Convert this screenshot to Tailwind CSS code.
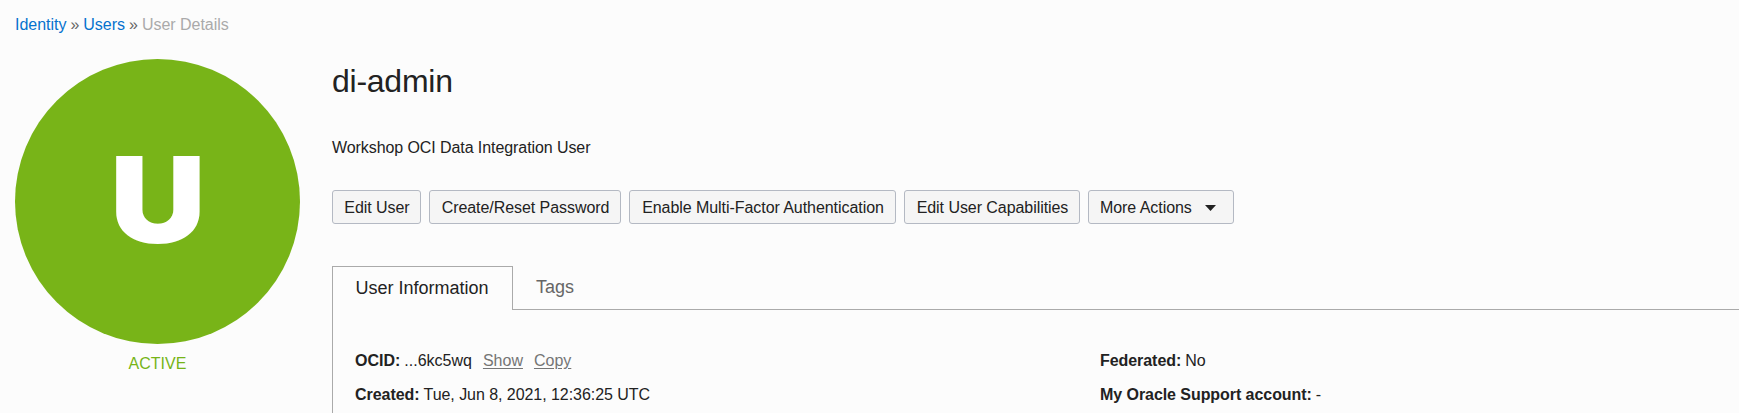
<!DOCTYPE html>
<html lang="en">
<head>
<meta charset="utf-8">
<title>User Details</title>
<script src="https://cdn.jsdelivr.net/npm/@tailwindcss/browser@4"></script>
</head>
<body class="h-[413px] overflow-hidden bg-[#fcfcfc] font-['Liberation_Sans',Arial,sans-serif] text-base leading-6 text-[#222] whitespace-nowrap">
<div class="flex h-[413px] flex-col overflow-hidden">
  <nav class="flex h-[59px] shrink-0 gap-1 pl-[15px] pt-[13px] tracking-[-0.02px] text-[#666]">
    <a class="text-[#0572ce]">Identity</a><span>»</span><a class="text-[#0572ce]">Users</a><span>»</span><span class="text-[#aaa]">User Details</span>
  </nav>
  <div class="flex grow pl-[15px]">
    <aside class="w-[285px] shrink-0 text-center text-[#76b417]">
      <div class="flex size-[285px] items-center justify-center rounded-full bg-[#78b418] pb-[3px]">
        <span class="scale-x-[1.115] font-['Inter'] text-[119px] leading-none font-black text-white">U</span>
      </div>
      <p class="mt-[8px]">ACTIVE</p>
    </aside>
    <main class="ml-[32px] flex grow flex-col">
      <h1 class="mt-[2px] text-[32px] leading-10 tracking-[-0.25px]">di-admin</h1>
      <p class="mt-[35px] tracking-[-0.08px]">Workshop OCI Data Integration User</p>
      <div class="mt-[30px] flex gap-2 tracking-[-0.06px]">
        <button class="h-[34px] w-[89px] rounded-[3px] border border-[#b4b9c3] bg-[#f5f5f5] pl-px pt-px">Edit User</button>
        <button class="h-[34px] w-[192px] rounded-[3px] border border-[#b4b9c3] bg-[#f5f5f5] pl-px pt-px">Create/Reset Password</button>
        <button class="h-[34px] w-[267px] rounded-[3px] border border-[#b4b9c3] bg-[#f5f5f5] pl-px pt-px">Enable Multi-Factor Authentication</button>
        <button class="h-[34px] w-[176px] rounded-[3px] border border-[#b4b9c3] bg-[#f5f5f5] pl-px pt-px">Edit User Capabilities</button>
        <button class="flex h-[34px] w-[146px] items-center justify-between rounded-[3px] border border-[#b4b9c3] bg-[#f5f5f5] pl-[11px] pr-[17px]"><span class="pt-px">More Actions</span>
          <svg class="mt-px h-[6px] w-[11px]" viewBox="0 0 11 6"><path d="M0 0H11L5.5 6Z" fill="#222"/></svg>
        </button>
      </div>
      <div class="mt-[42px] flex h-[44px] shrink-0 text-lg leading-6">
        <div class="w-[181px] border-l border-t border-r border-[#aaa] pl-[22.5px] pt-[9px]">User Information</div>
        <div class="grow border-b border-[#aaa] pl-[23px] pt-[9px] text-[#666]">Tags</div>
      </div>
      <div class="flex grow border-l border-[#aaa] pl-[22px] pt-[39px]">
        <dl class="flex w-[745px] flex-col gap-[10px]">
          <div class="flex gap-1"><dt class="font-bold">OCID:</dt><dd>...6kc5wq</dd><a class="ml-[7px] text-[#757575] underline underline-offset-2">Show</a><a class="ml-[7px] text-[#757575] underline underline-offset-2">Copy</a></div>
          <div class="flex gap-1 tracking-[-0.05px]"><dt class="font-bold">Created:</dt><dd>Tue, Jun 8, 2021, 12:36:25 UTC</dd></div>
        </dl>
        <dl class="flex flex-col gap-[10px] tracking-[-0.06px]">
          <div class="flex gap-1"><dt class="font-bold">Federated:</dt><dd>No</dd></div>
          <div class="flex gap-1"><dt class="font-bold">My Oracle Support account:</dt><dd>-</dd></div>
        </dl>
      </div>
    </main>
  </div>
</div>
</body>
</html>
